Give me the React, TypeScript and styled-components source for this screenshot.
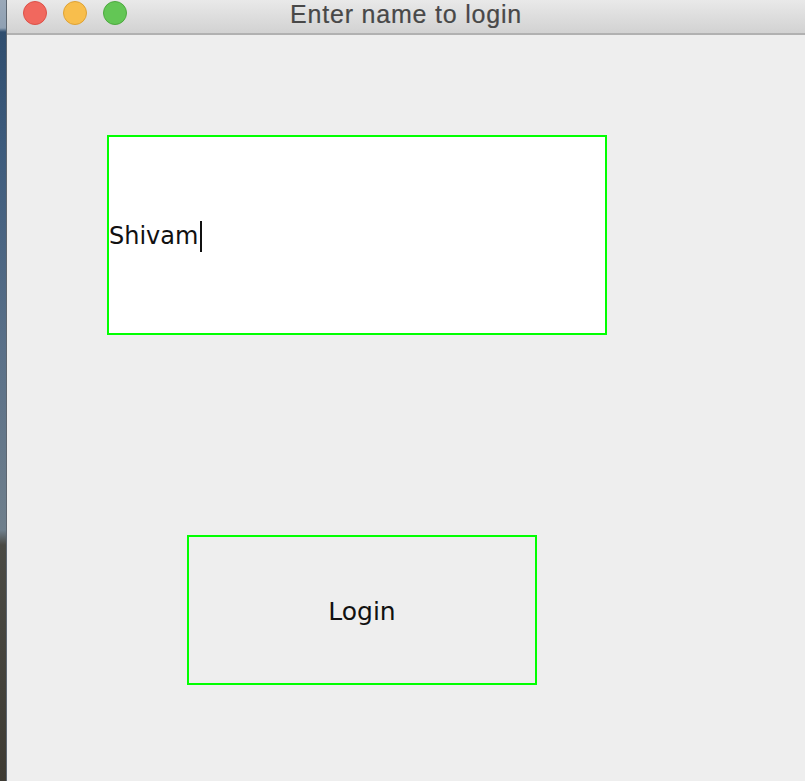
import React from "react";
import styled, { createGlobalStyle } from "styled-components";

const Global = createGlobalStyle`
  html, body {
    margin: 0;
    padding: 0;
    width: 805px;
    height: 781px;
    overflow: hidden;
    background: #eeeeee;
  }
  #root { height: 781px; }
`;

const Screen = styled.div`
  display: flex;
  width: 805px;
  height: 781px;
`;

const Desktop = styled.div`
  width: 6px;
  flex: 0 0 6px;
  border-right: 1px solid #5d6670;
  background: linear-gradient(
    to bottom,
    #9aa8b8 0px,
    #8fa0b3 28px,
    #2f4d6e 32px,
    #3d5b7c 150px,
    #5a7088 350px,
    #6f7f8c 530px,
    #4a4a44 545px,
    #3e3b33 781px
  );
`;

const Window = styled.div`
  flex: 1;
  display: flex;
  flex-direction: column;
  background: #eeeeee;
`;

const TitleBar = styled.div`
  position: relative;
  height: 33px;
  flex: 0 0 33px;
  display: flex;
  align-items: center;
  justify-content: center;
  background: linear-gradient(to bottom, #e9e9e9, #d2d2d2);
  border-bottom: 2px solid #b1b1b1;
`;

const Lights = styled.div`
  position: absolute;
  left: 16px;
  top: 1px;
  display: flex;
  gap: 16px;
`;

const Light = styled.span<{ $fill: string; $edge: string }>`
  width: 24px;
  height: 24px;
  border-radius: 50%;
  box-sizing: border-box;
  background: ${(p) => p.$fill};
  border: 1px solid ${(p) => p.$edge};
`;

const Title = styled.div`
  font-family: "Liberation Sans", Arial, sans-serif;
  font-size: 25px;
  letter-spacing: 0.8px;
  color: #484848;
  margin-top: -4px;
  -webkit-text-stroke: 0.2px #484848;
`;

const Content = styled.div`
  flex: 1;
  display: flex;
  flex-direction: column;
  align-items: flex-start;
`;

const NameField = styled.div`
  box-sizing: border-box;
  margin: 100px 0 0 100px;
  width: 500px;
  height: 200px;
  border: 2px solid #00ff00;
  background: #ffffff;
  display: flex;
  align-items: center;
  padding-top: 2px;
  font-family: "DejaVu Sans", sans-serif;
  font-size: 24px;
  color: #111111;
`;

const Caret = styled.span`
  display: inline-block;
  width: 2px;
  height: 31px;
  background: #111111;
  margin-left: 2px;
`;

const LoginButton = styled.button`
  box-sizing: border-box;
  margin: 200px 0 0 180px;
  width: 350px;
  height: 150px;
  border: 2px solid #00ff00;
  background: #eeeeee;
  font-family: "DejaVu Sans", sans-serif;
  font-size: 25px;
  color: #111111;
  padding: 2px 0 0;
  cursor: pointer;
`;

export default function App() {
  return (
    <>
      <Global />
      <Screen>
        <Desktop />
        <Window>
          <TitleBar>
            <Lights>
              <Light $fill="#f1685e" $edge="#dc5148" />
              <Light $fill="#f8be4c" $edge="#dea235" />
              <Light $fill="#63c655" $edge="#4da93f" />
            </Lights>
            <Title>Enter name to login</Title>
          </TitleBar>
          <Content>
            <NameField>
              Shivam
              <Caret />
            </NameField>
            <LoginButton>Login</LoginButton>
          </Content>
        </Window>
      </Screen>
    </>
  );
}
